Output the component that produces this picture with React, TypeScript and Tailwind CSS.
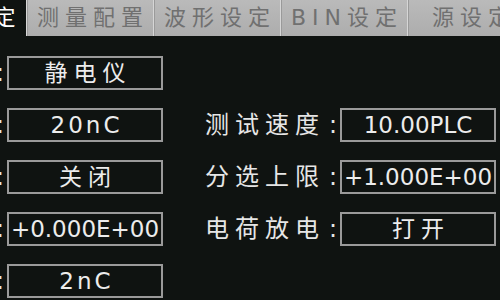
import React from "react";

const tabs = ["测量设定", "测量配置", "波形设定", "BIN设定", "源设定"];

type Field = { label: string; value: string; wide?: boolean } | null;

// left column labels fall off the left edge of the screen, only their colons show
const rows: [Field, Field][] = [
  [{ label: "测试功能", value: "静电仪" }, null],
  [{ label: "测试量程", value: "20nC", wide: true }, { label: "测试速度", value: "10.00PLC" }],
  [{ label: "自动量程", value: "关闭" }, { label: "分选上限", value: "+1.000E+00" }],
  [{ label: "分选下限", value: "+0.000E+00" }, { label: "电荷放电", value: "打开" }],
  [{ label: "最小量程", value: "2nC", wide: true }, null],
];

const isCjk = (s: string) => /[\u4e00-\u9fff]/.test(s);

function FieldRow({ field }: { field: Field }) {
  if (!field) return <div />;
  return (
    <div className="flex h-[34px] items-center">
      <div className="flex w-[135px] shrink-0 items-center justify-between pr-[3px] text-[24px] leading-none text-[#e6e6e6]">
        <span className="tracking-[6px]">{field.label}</span>
        <span>:</span>
      </div>
      <div className="flex h-[34px] w-[156px] shrink-0 items-center justify-center border-2 border-[#9a9a9a] text-[#ececec]">
        {isCjk(field.value) ? (
          <span className="pl-[6px] text-[23px] leading-none tracking-[6px]">{field.value}</span>
        ) : field.wide ? (
          <span className="whitespace-nowrap pl-[3px] text-[23px] leading-none tracking-[3px]">{field.value}</span>
        ) : (
          <span className="whitespace-nowrap text-[23px] leading-none">{field.value}</span>
        )}
      </div>
    </div>
  );
}

export default function App() {
  return (
    <div className="h-[300px] w-[500px] overflow-hidden bg-[#0f1311] font-['DejaVu_Sans','Noto_Sans_CJK_SC',sans-serif]">
      <div className="-ml-[101px] flex h-[36px] bg-gradient-to-b from-[#bababa] to-[#adadad]">
        {tabs.map((t, i) => (
          <div
            key={t}
            className={
              i === 0
                ? "flex w-[127px] shrink-0 items-center justify-center bg-[#0f1311] pl-[6px] text-[22px] leading-none tracking-[6px] text-white"
                : "flex w-[127px] shrink-0 items-center justify-center border-l border-[#d6d6d6] pl-[6px] text-[22px] leading-none tracking-[6px] text-[#707070] shadow-[inset_1px_0_0_#9a9a9a]"
            }
          >
            {t}
          </div>
        ))}
      </div>

      <div className="-ml-[128px] grid grid-cols-[291px_291px] gap-x-[42px] gap-y-[18px] pt-[20px]">
        {rows.map(([l, r], i) => (
          <React.Fragment key={i}>
            <FieldRow field={l} />
            <FieldRow field={r} />
          </React.Fragment>
        ))}
      </div>
    </div>
  );
}
